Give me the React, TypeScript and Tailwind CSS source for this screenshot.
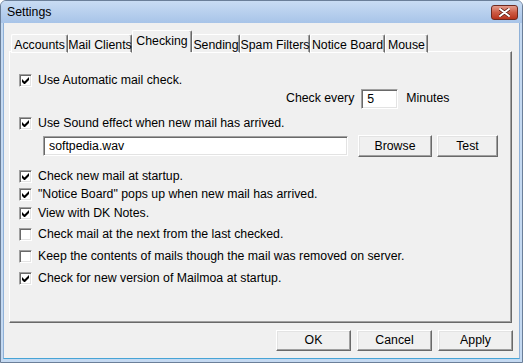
import React, { useState } from "react";

const font = { fontFamily: '"Liberation Sans", Arial, sans-serif' };

const Check: React.FC<{ checked: boolean; onToggle: () => void }> = ({ checked, onToggle }) => (
  <button
    type="button"
    onClick={onToggle}
    className="w-[13px] h-[13px] shrink-0 bg-white border border-t-[#a0a0a0] border-l-[#a0a0a0] border-b-[#ffffff] border-r-[#ffffff] flex items-center justify-center shadow-[inset_1px_1px_0_#696969,inset_-1px_-1px_0_#e3e3e3]"
  >
    {checked && (
      <svg width="7" height="7" viewBox="0 0 7 7">
        <path d="M0 2v3l2 2h1l4-4V0L2.5 4.5z" fill="#000" />
      </svg>
    )}
  </button>
);

const Row: React.FC<{ label: string; initial: boolean; className?: string }> = ({ label, initial, className }) => {
  const [on, setOn] = useState(initial);
  return (
    <div className={"flex items-center h-[13px] gap-[6px] " + (className ?? "")}>
      <Check checked={on} onToggle={() => setOn(!on)} />
      <span className="text-[12.3px] leading-none text-black whitespace-nowrap">{label}</span>
    </div>
  );
};

const Btn: React.FC<{ label: string; className?: string }> = ({ label, className }) => (
  <button
    type="button"
    className={
      "h-[21px] bg-[#f0f0f0] text-[12.3px] text-black border border-t-[#ffffff] border-l-[#ffffff] border-b-[#696969] border-r-[#696969] shadow-[inset_-1px_-1px_0_#a0a0a0,inset_1px_1px_0_#e3e3e3] flex items-center justify-center whitespace-nowrap " +
      (className ?? "")
    }
  >
    {label}
  </button>
);

const tabs = ["Accounts", "Mail Clients", "Checking", "Sending", "Spam Filters", "Notice Board", "Mouse"];
const tabWidths = ["w-[57px]", "w-[64px]", "w-[60px]", "w-[48px]", "w-[70px]", "w-[75px]", "w-[43px]"];

export default function App() {
  const [active, setActive] = useState(2);
  const [minutes, setMinutes] = useState("5");

  return (
    <div className="w-[523px] h-[363px] bg-[#c4d9f1] flex flex-col border border-[#6b7f99] rounded-t-[6px] overflow-hidden" style={font}>
      {/* title bar */}
      <div className="h-[22px] shrink-0 flex items-center justify-between pl-[6px] pr-[4px] bg-gradient-to-b from-[#c9dcf3] to-[#a8c4e8]">
        <span className="text-[12.3px] text-black mt-[1px]">Settings</span>
        <button
          type="button"
          className="w-[27px] h-[15px] mt-[1px] rounded-[3px] border border-[#6d2a21] bg-gradient-to-b from-[#e29b8d] via-[#cd5b45] to-[#b8331c] flex items-center justify-center"
        >
          <svg width="11" height="9" viewBox="0 0 11 9">
            <path d="M1 1l9 7M10 1L1 8" stroke="#5b1a10" strokeWidth="3.4" strokeLinecap="round" />
            <path d="M1 1l9 7M10 1L1 8" stroke="#ffffff" strokeWidth="2" strokeLinecap="round" />
          </svg>
        </button>
      </div>

      {/* client */}
      <div className="flex-1 mx-[2px] mb-[3px] bg-[#f0f0f0] border-l border-r border-b border-l-[#8fb1d8] border-r-[#8fb1d8] border-b-[#47a4d6] flex flex-col pl-[5px] pr-[6px] pt-[7px]">
        {/* tabs */}
        <div className="flex items-end h-[22px] pl-[2px] relative z-10">
          {tabs.map((t, i) => {
            const sel = i === active;
            return (
              <button
                key={t}
                type="button"
                onClick={() => setActive(i)}
                className={
                  tabWidths[i] +
                  " shrink-0 whitespace-nowrap text-[12.3px] text-black bg-[#f0f0f0] border-t border-l border-r border-t-[#ffffff] border-l-[#ffffff] border-r-[#696969] rounded-t-[2px] flex items-start justify-center leading-none shadow-[inset_-1px_0_0_#a0a0a0] " +
                  (sel ? "h-[22px] pt-[4px]" : "h-[19px] mb-[-1px] pt-[4px] border-b border-b-[#ffffff]")
                }
              >
                {t}
              </button>
            );
          })}
        </div>

        {/* panel */}
        <div className="h-[272px] mr-[1px] -mt-[1px] border border-t-[#ffffff] border-l-[#ffffff] border-b-[#696969] border-r-[#696969] shadow-[inset_-1px_-1px_0_#a0a0a0] flex flex-col pl-[9px] pt-[22px]">
          <Row label="Use Automatic mail check." initial />

          <div className="flex items-center mt-[1px] ml-[267px] h-[21px]">
            <span className="text-[12.3px] text-black whitespace-nowrap">Check every</span>
            <input
              value={minutes}
              onChange={(e) => setMinutes(e.target.value)}
              className="ml-[7px] w-[37px] h-[20px] bg-white text-[12.3px] text-black pl-[5px] outline-none border border-t-[#a0a0a0] border-l-[#a0a0a0] border-b-[#ffffff] border-r-[#ffffff] shadow-[inset_1px_1px_0_#696969,inset_-1px_-1px_0_#e3e3e3]"
            />
            <span className="ml-[8px] text-[12.3px] text-black">Minutes</span>
          </div>

          <Row label="Use Sound effect when new mail has arrived." initial className="mt-[8px]" />

          <div className="flex items-center mt-[5px] ml-[24px] h-[22px]">
            <input
              defaultValue="softpedia.wav"
              className="w-[305px] shrink-0 h-[20px] bg-white text-[12.3px] text-black pl-[5px] outline-none border border-t-[#a0a0a0] border-l-[#a0a0a0] border-b-[#ffffff] border-r-[#ffffff] shadow-[inset_1px_1px_0_#696969,inset_-1px_-1px_0_#e3e3e3]"
            />
            <Btn label="Browse" className="ml-[10px] w-[74px] shrink-0 h-[22px]" />
            <Btn label="Test" className="ml-[5px] w-[61px] shrink-0 h-[22px]" />
          </div>

          <Row label="Check new mail at startup." initial className="mt-[13px]" />
          <Row label={'"Notice Board" pops up when new mail has arrived.'} initial className="mt-[5px]" />
          <Row label="View with DK Notes." initial className="mt-[6px]" />
          <Row label="Check mail at the next from the last checked." initial={false} className="mt-[8px]" />
          <Row label="Keep the contents of mails though the mail was removed on server." initial={false} className="mt-[9px]" />
          <Row label="Check for new version of Mailmoa at startup." initial className="mt-[9px]" />
        </div>

        {/* dialog buttons */}
        <div className="flex justify-end gap-[6px] mt-[7px]">
          <Btn label="OK" className="w-[75px]" />
          <Btn label="Cancel" className="w-[75px]" />
          <Btn label="Apply" className="w-[75px]" />
        </div>
      </div>
    </div>
  );
}
